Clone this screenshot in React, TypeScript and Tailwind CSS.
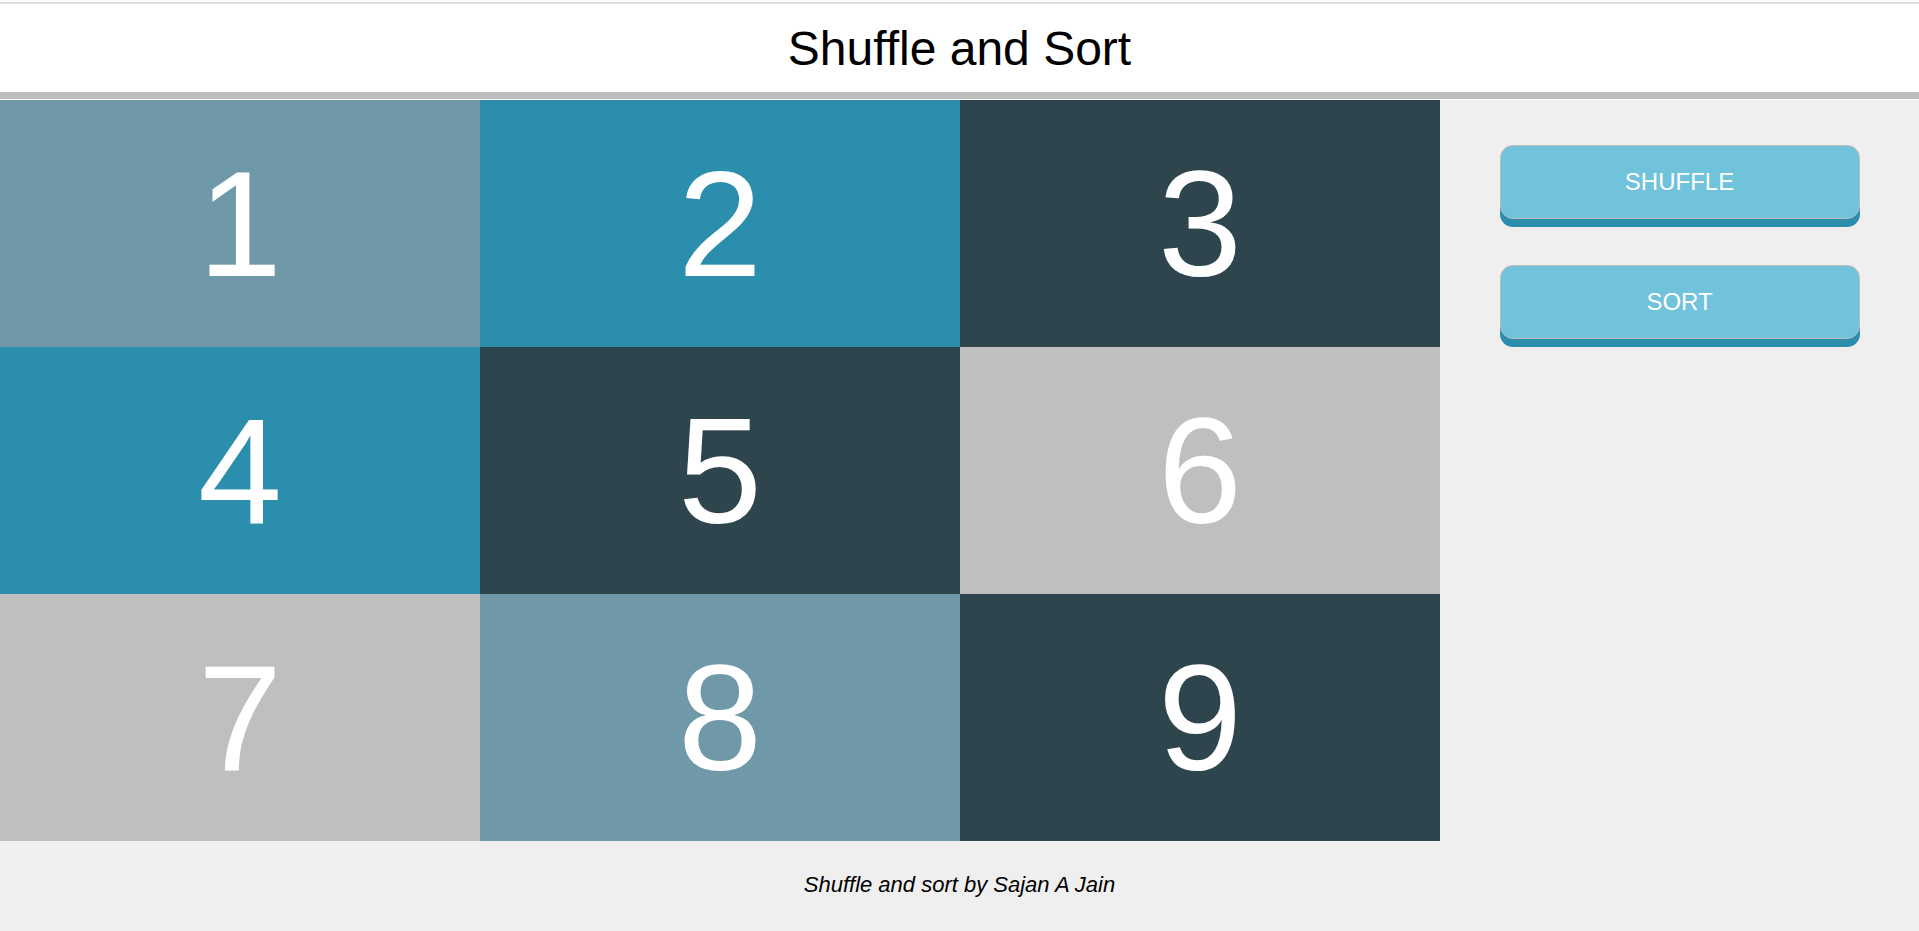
import React from "react";

const tiles = [
  { n: 1, c: "bg-[#6f98a8]" },
  { n: 2, c: "bg-[#2b8ead]" },
  { n: 3, c: "bg-[#2f454e]" },
  { n: 4, c: "bg-[#2b8ead]" },
  { n: 5, c: "bg-[#2f454e]" },
  { n: 6, c: "bg-[#bfbfbf]" },
  { n: 7, c: "bg-[#bfbfbf]" },
  { n: 8, c: "bg-[#6f98a8]" },
  { n: 9, c: "bg-[#2f454e]" },
];

export default function App() {
  return (
    <div className="min-h-[931px] bg-[#efefef] font-['Liberation_Sans',Arial,sans-serif]">
      <header className="bg-white pt-[2px]">
        <div className="h-[2px] bg-[#dddddd]" />
        <div className="h-[88px] flex items-center justify-center pt-[2px]">
          <h1 className="text-[48px] leading-[1.15] text-black font-normal">Shuffle and Sort</h1>
        </div>
        <div className="h-[7px] bg-[#bdbdbd]" />
        <div className="h-[1px] bg-white" />
      </header>
      <main className="flex">
        <div className="grid grid-cols-3 w-[1440px]">
          {tiles.map((t) => (
            <div
              key={t.n}
              className={`${t.c} h-[247px] flex items-center justify-center text-white text-[151px] leading-[1.15]`}
            >
              {t.n}
            </div>
          ))}
        </div>
        <div className="flex-1 flex flex-col items-center pt-[45px] gap-[46px]">
          <button className="w-[360px] h-[74px] rounded-[13px] border border-[#bcbcbc] bg-[#71c2db] text-white text-[24px] shadow-[0_8px_0_#2b8ead]">
            SHUFFLE
          </button>
          <button className="w-[360px] h-[74px] rounded-[13px] border border-[#bcbcbc] bg-[#71c2db] text-white text-[24px] shadow-[0_8px_0_#2b8ead]">
            SORT
          </button>
        </div>
      </main>
      <footer className="pt-[31px] text-center">
        <p className="italic text-[22px] leading-[1.15] text-black">Shuffle and sort by Sajan A Jain</p>
      </footer>
    </div>
  );
}
